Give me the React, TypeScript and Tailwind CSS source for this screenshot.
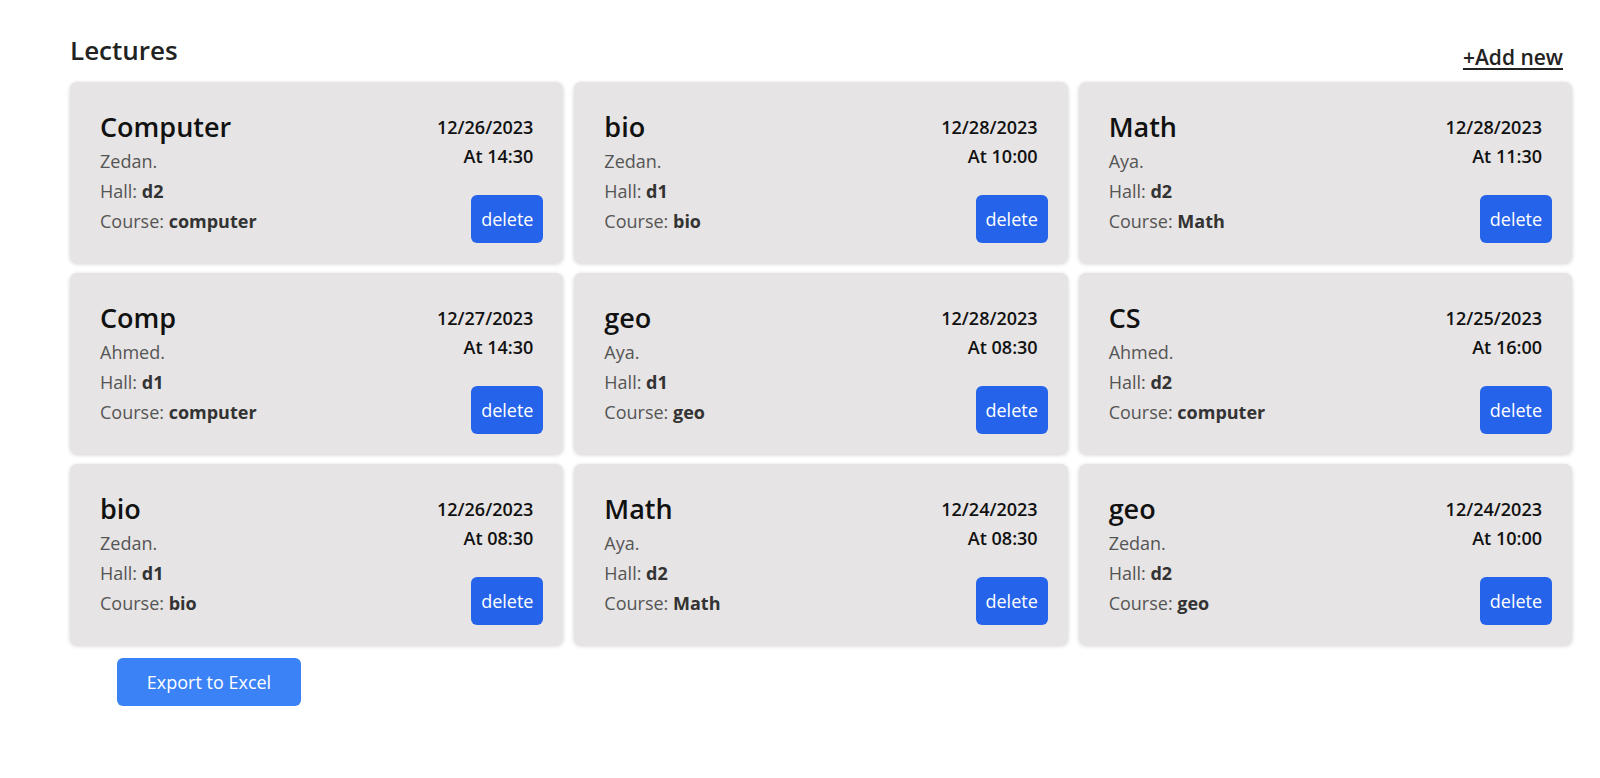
import React from "react";

type Lecture = {
  title: string;
  teacher: string;
  hall: string;
  course: string;
  date: string;
  time: string;
};

const lectures: Lecture[] = [
  { title: "Computer", teacher: "Zedan.", hall: "d2", course: "computer", date: "12/26/2023", time: "14:30" },
  { title: "bio", teacher: "Zedan.", hall: "d1", course: "bio", date: "12/28/2023", time: "10:00" },
  { title: "Math", teacher: "Aya.", hall: "d2", course: "Math", date: "12/28/2023", time: "11:30" },
  { title: "Comp", teacher: "Ahmed.", hall: "d1", course: "computer", date: "12/27/2023", time: "14:30" },
  { title: "geo", teacher: "Aya.", hall: "d1", course: "geo", date: "12/28/2023", time: "08:30" },
  { title: "CS", teacher: "Ahmed.", hall: "d2", course: "computer", date: "12/25/2023", time: "16:00" },
  { title: "bio", teacher: "Zedan.", hall: "d1", course: "bio", date: "12/26/2023", time: "08:30" },
  { title: "Math", teacher: "Aya.", hall: "d2", course: "Math", date: "12/24/2023", time: "08:30" },
  { title: "geo", teacher: "Zedan.", hall: "d2", course: "geo", date: "12/24/2023", time: "10:00" },
];

function Card({ l }: { l: Lecture }) {
  return (
    <div className="h-[181px] rounded-[7px] bg-[#e6e4e4] shadow-[0_1px_4px_rgba(0,0,0,0.18)] flex justify-between pl-[30px] pr-[20px] pt-[26px] pb-[20px]">
      <div className="flex flex-col">
        <div className="text-[27px] leading-[38px] font-semibold text-[#111]">{l.title}</div>
        <div className="text-[18px] leading-[30px] text-[#555]">{l.teacher}</div>
        <div className="text-[18px] leading-[30px] text-[#555]">
          Hall: <span className="font-bold text-[#333]">{l.hall}</span>
        </div>
        <div className="text-[18px] leading-[30px] text-[#555]">
          Course: <span className="font-bold text-[#333]">{l.course}</span>
        </div>
      </div>
      <div className="flex flex-col items-end justify-between">
        <div className="flex flex-col items-end pr-[10px] pt-[5px]">
          <div className="text-[18px] leading-[29px] font-semibold text-[#111]">{l.date}</div>
          <div className="text-[18px] leading-[29px] font-semibold text-[#111]">At {l.time}</div>
        </div>
        <button className="w-[72px] h-[48px] rounded-[6px] bg-[#2563eb] text-white text-[18px]">delete</button>
      </div>
    </div>
  );
}

export default function App() {
  return (
    <div className="min-h-[778px] bg-white" style={{ fontFamily: '"Open Sans", "Noto Sans", sans-serif' }}>
      <div className="ml-[70px] w-[1502px] pt-[30px]">
        <div className="flex justify-between items-end pr-[9px] h-[52px]">
          <h1 className="text-[26px] leading-[32px] font-semibold text-[#222] mb-[16px]">Lectures</h1>
          <a href="#" className="text-[21px] leading-[28px] font-semibold text-[#222] underline underline-offset-[3px] mb-[11px]">+Add new</a>
        </div>
        <div className="grid grid-cols-3 gap-x-[11px] gap-y-[10px]">
          {lectures.map((l, i) => (
            <Card key={i} l={l} />
          ))}
        </div>
        <button className="ml-[47px] mt-[13px] w-[184px] h-[48px] rounded-[6px] bg-[#3b82f6] text-white text-[18px]">
          Export to Excel
        </button>
      </div>
    </div>
  );
}
